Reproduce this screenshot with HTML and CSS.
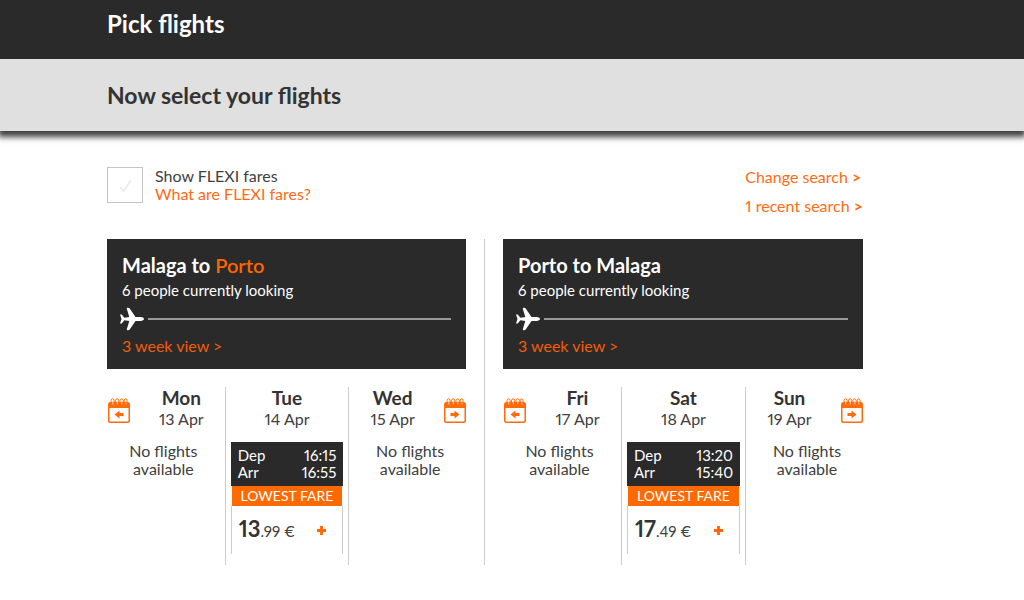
FILE: index.html
```html
<!DOCTYPE html>
<html lang="en">
<head>
<meta charset="utf-8">
<meta name="viewport" content="width=device-width, initial-scale=1">
<title>Pick flights</title>
<link rel="stylesheet" href="styles.css">
</head>
<body>
<svg class="sprite" aria-hidden="true">
  <symbol id="plane" viewBox="0 0 24 24">
    <path d="M24 12c0-1.100-1.600-1.900-3.400-1.900h-5.100L9.700 1.500C9 .5 6.500.4 6.800 1.800L9.300 10.100 4.400 10.800 1.700 7.600H0L1.500 12 0 16.400h1.700l2.700-3.200 4.900.7-2.500 8.300c-.3 1.400 2.200 1.300 2.900.3l5.800-8.600h5.100c1.800 0 3.400-.8 3.400-1.900z"/>
  </symbol>
  <symbol id="calendar" viewBox="0 0 22 25">
    <path d="M2.500 4h17A2.500 2.500 0 0 1 22 6.500v16a2.500 2.500 0 0 1-2.500 2.500h-17A2.500 2.500 0 0 1 0 22.500v-16A2.500 2.500 0 0 1 2.500 4zM1.500 10v12.500q0 1 1 1h17q1 0 1-1V10z" fill-rule="evenodd"/>
    <path class="ring-gap" d="M4.800 6.500V3M9.300 6.500V3M13.800 6.500V3M18 6.500V3"/>
    <path class="ring" d="M3 5V2.500Q3.200.8 4.600.8T6.200 2.500V6M7.500 5V2.500Q7.700.8 9.100.8t1.600 1.700V6M12 5V2.500q.2-1.700 1.600-1.700t1.600 1.700V6M16.300 5V2.500Q16.500.8 17.700.8T19 2.500V6"/>
  </symbol>
</svg>

<header class="topbar"><h1 class="title title-main">Pick flights</h1></header>
<div class="subbar"><h2 class="title">Now select your flights</h2></div>

<main class="content">
  <div class="options">
    <div class="flexi">
      <span class="tick">
        <input class="tick-box" type="checkbox" id="flexi">
        <svg class="tick-mark" viewBox="0 0 14 14" aria-hidden="true"><path d="M1 8l4 4.500L12.500 1"/></svg>
      </span>
      <div>
        <label class="line" for="flexi">Show FLEXI fares</label>
        <a class="line link" href="#">What are FLEXI fares?</a>
      </div>
    </div>
    <nav class="searches">
      <a class="link" href="#">Change search <b>&gt;</b></a>
      <a class="link" href="#">1 recent search <b>&gt;</b></a>
    </nav>
  </div>

  <div class="journeys">
    <section>
      <div class="route">
        <h3 class="route-name">Malaga to <span class="accent">Porto</span></h3>
        <p class="looking">6 people currently looking</p>
        <div class="track"><svg class="plane" aria-hidden="true"><use href="#plane"/></svg><span class="track-line"></span></div>
        <a class="weeks" href="#">3 week view &gt;</a>
      </div>
      <div class="days">
        <div class="day day-first">
          <div class="day-head">
            <button class="shift" type="button" aria-label="Earlier days"><svg class="calendar" viewBox="0 0 22 25"><use href="#calendar"/><path d="M6.500 16.500l5-4v2.500h4v3h-4v2.500z"/></svg></button>
            <div class="date"><strong class="weekday">Mon</strong>13 Apr</div>
          </div>
          <p class="none">No flights<br>available</p>
        </div>
        <div class="day day-mid">
          <div class="day-head"><div class="date"><strong class="weekday">Tue</strong>14 Apr</div></div>
          <div class="fare">
            <dl class="times"><dt>Dep</dt><dd>16:15</dd><dt>Arr</dt><dd>16:55</dd></dl>
            <p class="lowest">LOWEST FARE</p>
            <div class="buy"><span class="price"><b class="whole">13</b>.99 €</span><button class="add" type="button" aria-label="Add flight"><svg class="plus" viewBox="0 0 8 8"><path d="M4 0v8M0 4h8"/></svg></button></div>
          </div>
        </div>
        <div class="day day-last">
          <div class="day-head">
            <div class="date"><strong class="weekday">Wed</strong>15 Apr</div>
            <button class="shift" type="button" aria-label="Later days"><svg class="calendar" viewBox="0 0 22 25"><use href="#calendar"/><path d="M15.500 16.500l-5-4v2.500h-4v3h4v2.500z"/></svg></button>
          </div>
          <p class="none">No flights<br>available</p>
        </div>
      </div>
    </section>

    <div class="divider"></div>

    <section>
      <div class="route">
        <h3 class="route-name">Porto to Malaga</h3>
        <p class="looking">6 people currently looking</p>
        <div class="track"><svg class="plane" aria-hidden="true"><use href="#plane"/></svg><span class="track-line"></span></div>
        <a class="weeks" href="#">3 week view &gt;</a>
      </div>
      <div class="days">
        <div class="day day-first">
          <div class="day-head">
            <button class="shift" type="button" aria-label="Earlier days"><svg class="calendar" viewBox="0 0 22 25"><use href="#calendar"/><path d="M6.500 16.500l5-4v2.500h4v3h-4v2.500z"/></svg></button>
            <div class="date"><strong class="weekday">Fri</strong>17 Apr</div>
          </div>
          <p class="none">No flights<br>available</p>
        </div>
        <div class="day day-mid">
          <div class="day-head"><div class="date"><strong class="weekday">Sat</strong>18 Apr</div></div>
          <div class="fare">
            <dl class="times"><dt>Dep</dt><dd>13:20</dd><dt>Arr</dt><dd>15:40</dd></dl>
            <p class="lowest">LOWEST FARE</p>
            <div class="buy"><span class="price"><b class="whole">17</b>.49 €</span><button class="add" type="button" aria-label="Add flight"><svg class="plus" viewBox="0 0 8 8"><path d="M4 0v8M0 4h8"/></svg></button></div>
          </div>
        </div>
        <div class="day day-last">
          <div class="day-head">
            <div class="date"><strong class="weekday">Sun</strong>19 Apr</div>
            <button class="shift" type="button" aria-label="Later days"><svg class="calendar" viewBox="0 0 22 25"><use href="#calendar"/><path d="M15.500 16.500l-5-4v2.500h-4v3h4v2.500z"/></svg></button>
          </div>
          <p class="none">No flights<br>available</p>
        </div>
      </div>
    </section>
  </div>
</main>
</body>
</html>
```
FILE: styles.css
```css
* { box-sizing: border-box; margin: 0; padding: 0; }

body {
  background: #fff;
  color: #404040;
  font: 16px/18px Lato, "Open Sans", sans-serif;
  font-variant-numeric: proportional-nums;
}

button { border: 0; background: none; cursor: pointer; }
svg { display: block; }
a { text-decoration: none; }
.sprite { position: absolute; width: 0; height: 0; }

.topbar { padding: 8px 107px 19px; background: #2a2a2a; color: #fff; }
.subbar {
  padding: 20px 107px;
  background: #e0e0e0;
  color: #333;
  box-shadow: 0 4px 6px 2px rgba(0, 0, 0, .75);
  clip-path: inset(0 0 -16px);
}
.title { font-size: 23px; line-height: 32px; font-weight: 700; }
.title-main { font-size: 24px; }

.content { max-width: 863px; padding: 36px 0 32px 107px; }

.options { display: flex; justify-content: space-between; align-items: flex-start; margin-bottom: 24px; }
.flexi { display: flex; gap: 12px; }
.line { display: block; }
.link { color: #ff6a14; }
.tick { position: relative; width: 36px; height: 36px; }
.tick-box { display: block; width: 36px; height: 36px; appearance: none; border: 1px solid #c4c4c4; background: #fff; }
.tick-mark { position: absolute; top: 12px; left: 12px; width: 13px; height: 14px; fill: none; stroke: #ececec; stroke-width: 2; pointer-events: none; }
.tick-box:checked + .tick-mark { stroke: #ff6600; }
.searches { display: flex; flex-direction: column; gap: 11px; padding-top: 1px; }

.journeys { display: grid; grid-template-columns: minmax(0, 359fr) 1px minmax(0, 360fr); column-gap: 18px; }
.divider { background: #ccc; }

.route { padding: 15px 15px 14px; background: #2a2a2a; color: #fff; }
.route-name { font-size: 20px; line-height: 22px; font-weight: 700; }
.accent { color: #ff6600; font-weight: 600; }
.looking { margin-top: 5px; font-size: 15px; }
.track { display: flex; align-items: center; gap: 4px; margin: 8px 0 6px -2px; }
.plane { width: 24px; height: 24px; fill: #fff; }
.track-line { flex: 1; height: 2px; background: #999; }
.weeks { display: block; color: #f25c0a; }

.days { display: grid; grid-template-columns: 118fr 125fr 117fr; margin-top: 18px; }
.day { min-height: 178px; }
.day-mid { padding: 0 5px; border: solid #ccc; border-width: 0 1px; }
.day-head { display: flex; align-items: center; gap: 8px; }
.date { flex: 1; line-height: 21px; text-align: center; }
.weekday { display: block; font-size: 19px; color: #333; }
.shift { margin-top: 5px; }
.day-first .shift { padding-left: 1px; }
.calendar { width: 22px; height: 25px; fill: #ff6a0a; }
.ring { fill: none; stroke: #ff6a0a; stroke-width: 1; }
.ring-gap { fill: none; stroke: #ffd0a8; stroke-width: 1; }
.none { margin-top: 13px; text-align: center; }
.day-first .none { padding-right: 5px; }
.day-last .none { padding-left: 5px; }

.fare { margin-top: 13px; font-size: 15px; }
.times { display: grid; grid-template-columns: auto auto; justify-content: space-between; padding: 5px 7px; background: #2a2a2a; color: #fff; line-height: 17px; }
.times dd { text-align: right; }
.lowest { margin: 0 1px; background: #ff6a00; color: #fff; font-size: 14px; line-height: 20px; text-align: center; }
.buy { display: flex; align-items: center; justify-content: space-between; padding: 0 16px 0 7px; border: solid #ccc; border-width: 0 1px; line-height: 46px; white-space: nowrap; }
.whole { font-size: 22px; color: #333; }
.plus { width: 9px; height: 9px; stroke: #ff6600; stroke-width: 2.500; }
```
